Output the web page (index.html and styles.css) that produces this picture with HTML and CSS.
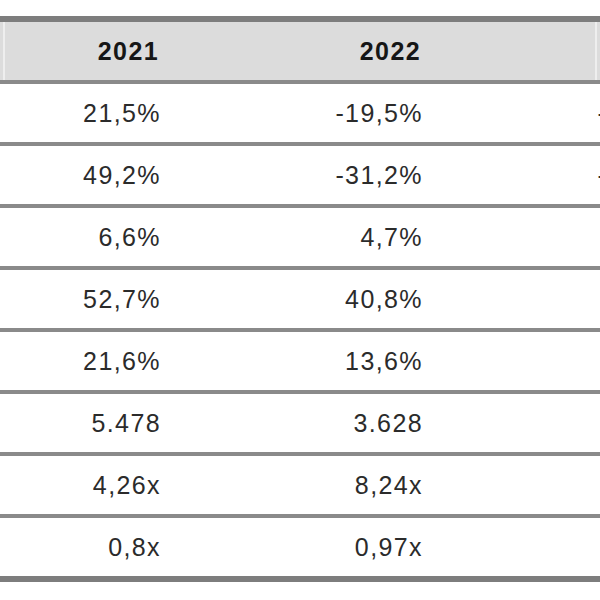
FILE: index.html
```html
<!DOCTYPE html>
<html>
<head>
<meta charset="utf-8">
<link rel="stylesheet" href="styles.css">
</head>
<body>
<div class="page">
  <div class="table">
    <div class="row head">
      <div class="cell stub"></div>
      <div class="cell c1">2021</div>
      <div class="cell c2">2022</div>
      <div class="cell c3">2023</div>
    </div>
    <div class="row">
      <div class="cell stub"></div>
      <div class="cell c1">21,5%</div>
      <div class="cell c2">-19,5%</div>
      <div class="cell c3">-10,2%</div>
    </div>
    <div class="row">
      <div class="cell stub"></div>
      <div class="cell c1">49,2%</div>
      <div class="cell c2">-31,2%</div>
      <div class="cell c3">-21,4%</div>
    </div>
    <div class="row">
      <div class="cell stub"></div>
      <div class="cell c1">6,6%</div>
      <div class="cell c2">4,7%</div>
      <div class="cell c3">5,1%</div>
    </div>
    <div class="row">
      <div class="cell stub"></div>
      <div class="cell c1">52,7%</div>
      <div class="cell c2">40,8%</div>
      <div class="cell c3">38,2%</div>
    </div>
    <div class="row">
      <div class="cell stub"></div>
      <div class="cell c1">21,6%</div>
      <div class="cell c2">13,6%</div>
      <div class="cell c3">11,9%</div>
    </div>
    <div class="row">
      <div class="cell stub"></div>
      <div class="cell c1">5.478</div>
      <div class="cell c2">3.628</div>
      <div class="cell c3">3.105</div>
    </div>
    <div class="row">
      <div class="cell stub"></div>
      <div class="cell c1">4,26x</div>
      <div class="cell c2">8,24x</div>
      <div class="cell c3">9,10x</div>
    </div>
    <div class="row last">
      <div class="cell stub"></div>
      <div class="cell c1">0,8x</div>
      <div class="cell c2">0,97x</div>
      <div class="cell c3">1,02x</div>
    </div>
  </div>
</div>
</body>
</html>
```

FILE: styles.css
```css
html, body {
  margin: 0;
  padding: 0;
  background: #ffffff;
}

.page {
  width: 600px;
  height: 600px;
  overflow: hidden;
  padding-top: 16px;
  box-sizing: border-box;
}

.table {
  width: 891px;
  border-top: 6px solid #7d7d7d;
  border-bottom: 6px solid #7d7d7d;
  font-family: "Liberation Sans", Arial, sans-serif;
  font-size: 25px;
  letter-spacing: 1.4px;
  color: #2b2b2b;
}

.row {
  display: grid;
  grid-template-columns: 3px 296px 296px 296px;
  height: 58px;
  border-bottom: 4px solid #8a8a8a;
}

.row.last {
  border-bottom: none;
}

.row.head {
  background: #dcdcdc;
  font-weight: bold;
  color: #161616;
}

.cell {
  display: flex;
  align-items: center;
  justify-content: flex-end;
  box-sizing: border-box;
  line-height: 1;
}

.c1 {
  padding-right: 138px;
}

.c2 {
  padding-right: 172px;
}

.c3 {
  padding-right: 206px;
}

.head .c1 {
  border-left: 2px solid #eeeeee;
  padding-right: 140px;
}

.head .c2 {
  padding-right: 174px;
}

.head .c3 {
  border-left: 2px solid #eeeeee;
}
```
